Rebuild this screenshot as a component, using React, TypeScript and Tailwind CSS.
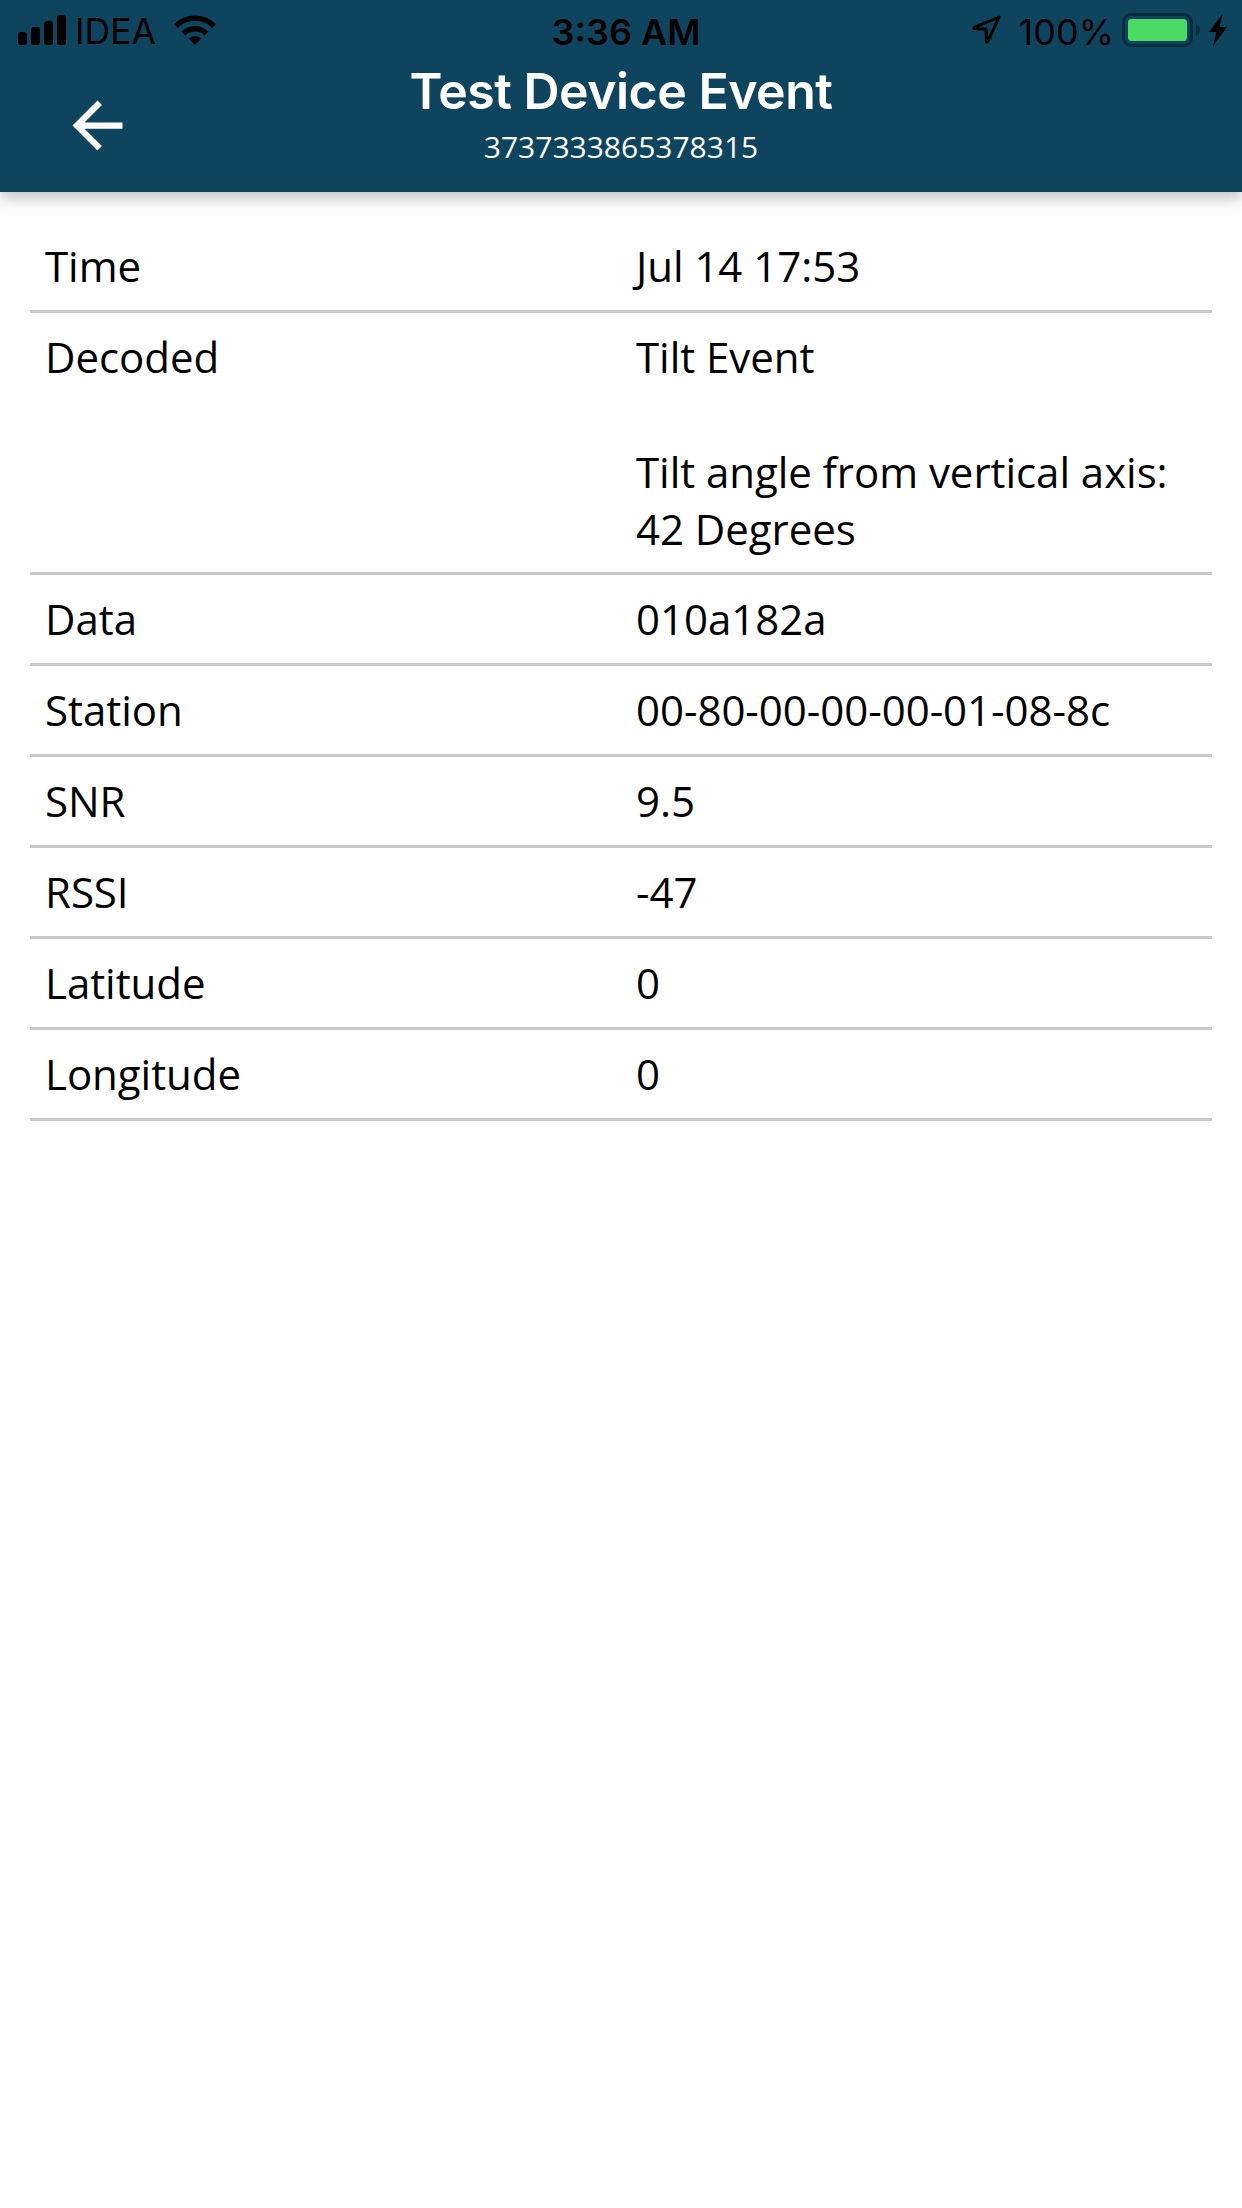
import React from 'react';

interface EventField {
  label: string;
  value: string;
}

const fields: EventField[] = [
  { label: 'Time', value: 'Jul 14 17:53' },
  { label: 'Decoded', value: 'Tilt Event\n\nTilt angle from vertical axis: 42 Degrees' },
  { label: 'Data', value: '010a182a' },
  { label: 'Station', value: '00-80-00-00-00-01-08-8c' },
  { label: 'SNR', value: '9.5' },
  { label: 'RSSI', value: '-47' },
  { label: 'Latitude', value: '0' },
  { label: 'Longitude', value: '0' },
];

const SignalIcon: React.FC = () => (
  <svg width="48" height="30" viewBox="0 0 48 30">
    <rect x="0" y="17" width="9" height="13" rx="3" />
    <rect x="13" y="12" width="9" height="18" rx="3" />
    <rect x="26" y="6" width="9" height="24" rx="3" />
    <rect x="39" y="0" width="9" height="30" rx="3" />
  </svg>
);

const WifiIcon: React.FC = () => (
  <svg width="42" height="30" viewBox="0 0 42 30">
    <path d="M21 30 14.7 23.6a9 9 0 0 1 12.6 0z" />
    <g fill="none" stroke="#000" strokeWidth="5.4">
      <path d="M9.4 18.5a16.4 16.4 0 0 1 23.2 0" />
      <path d="M1.9 11a27 27 0 0 1 38.2 0" />
    </g>
  </svg>
);

const LocationIcon: React.FC = () => (
  <svg width="30" height="30" viewBox="0 0 30 30">
    <path
      d="M27 2.2 2.3 12.3c-1 .4-.8 1.5.3 1.5l11.6.2.1 12c0 1.1 1.2 1.3 1.6.3z"
      fill="none"
      stroke="#000"
      strokeWidth="3"
      strokeLinejoin="round"
    />
  </svg>
);

const BatteryIcon: React.FC = () => (
  <svg width="78" height="34" viewBox="0 0 78 34">
    <rect x="1.5" y="1.5" width="68" height="31" rx="7.5" fill="none" stroke="#0a2c3d" strokeWidth="3" />
    <rect x="6" y="6" width="59" height="22" rx="3.5" fill="#4cd964" />
    <path d="M74 11c5 2 5 10 0 12z" fill="#0a2c3d" />
  </svg>
);

const StatusBar: React.FC = () => (
  <div className="grid h-[60px] grid-cols-[1fr_auto_1fr] items-center pl-[18px] pr-[15px] font-[Inter,sans-serif] text-[36px] leading-none text-black">
    <div className="flex items-center">
      <SignalIcon />
      <span className="ml-[9px] w-[87px] pt-[3px] text-[35.5px]">IDEA</span>
      <div className="ml-[12px]">
        <WifiIcon />
      </div>
    </div>
    <span className="pl-[7px] pt-[3px] font-semibold">3:36 AM</span>
    <div className="flex items-center justify-end">
      <LocationIcon />
      <span className="ml-[17px] mr-[8px] pt-[3px]">100%</span>
      <BatteryIcon />
      <svg className="ml-[9px]" width="18" height="32" viewBox="0 0 18 32">
        <path d="M13.5 0 0 18h7.5L4 32 18 13h-7.5z" />
      </svg>
    </div>
  </div>
);

const Header: React.FC = () => (
  <header className="h-[192px] bg-[#0f445e] shadow-[0_6px_15px_rgba(0,0,0,0.25)]">
    <StatusBar />
    <div className="grid h-[132px] grid-cols-[1fr_auto_1fr] text-white">
      <button type="button" aria-label="Back" className="ml-[60px] mt-[28px] h-[75px] w-[75px]">
        <svg width="75" height="75" viewBox="0 0 24 24" fill="#fff">
          <path d="M20 11H7.83l5.59-5.59L12 4l-8 8 8 8 1.41-1.41L7.83 13H20v-2z" />
        </svg>
      </button>
      <div className="text-center">
        <h1 className="font-[Inter,sans-serif] text-[50px] font-semibold leading-[62px] tracking-[-0.5px]">
          Test Device Event
        </h1>
        <p className="mt-[4px] font-['Open_Sans',sans-serif] text-[30px] leading-[41px]">3737333865378315</p>
      </div>
      <div />
    </div>
  </header>
);

const App: React.FC = () => {
  return (
    <div className="min-h-[2208px] w-full bg-white">
      <Header />
      <main className="px-[30px] pt-[30px] font-['Open_Sans',sans-serif] text-[42px] leading-[57.3px] tracking-[-0.04px] text-black">
        {fields.map((field) => (
          <div
            key={field.label}
            className="grid min-h-[91px] grid-cols-2 border-b-[3px] border-[#cacaca] pt-[15px] pb-[14.8px]"
          >
            <span className="px-[15px]">{field.label}</span>
            <span className="whitespace-pre-line px-[15px]">{field.value}</span>
          </div>
        ))}
      </main>
    </div>
  );
};

export default App;
